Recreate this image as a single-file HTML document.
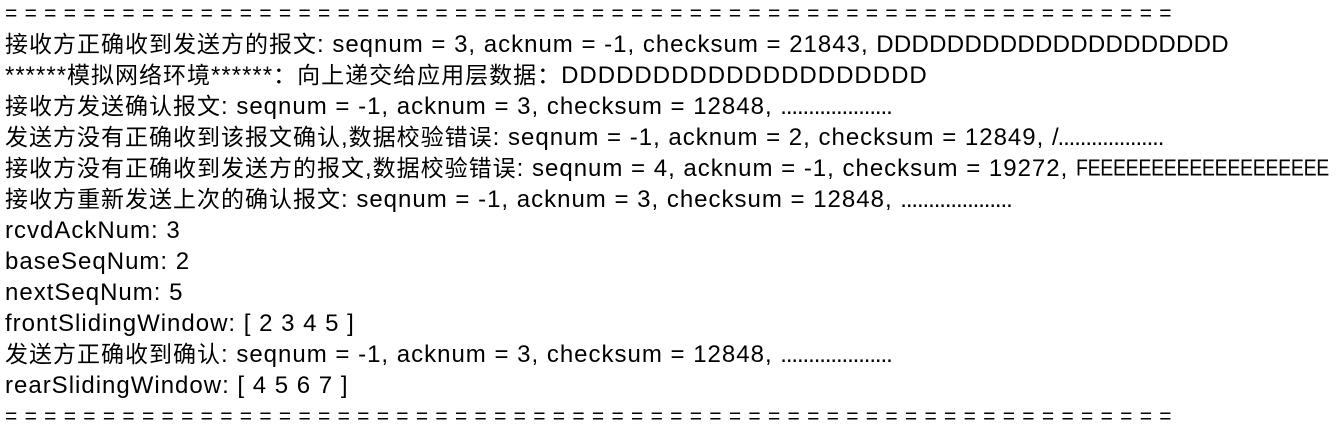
<!DOCTYPE html>
<html><head><meta charset="utf-8"><style>
html,body{margin:0;padding:0;background:#fff;width:1338px;height:430px;overflow:hidden}
body{font-family:"Liberation Sans","Noto Sans CJK SC",sans-serif;font-size:24px;letter-spacing:1px;line-height:31px;color:#000;padding:0 0 0 5px;box-sizing:border-box}
.w{position:relative;top:-2px}
div.l{white-space:pre;height:31px}
.c{font-size:23px;letter-spacing:1px}
.d{letter-spacing:-1.1px}
.e{letter-spacing:-0.3px;font-size:19.5px;display:inline-block;transform:scaleY(1.2);transform-origin:0 75%}
.eq{letter-spacing:7.3px;font-size:21px}
</style></head><body><div class="w">
<div class="l eq">============================================================</div>
<div class="l"><span class="c">接收方正确收到发送方的报文</span>: seqnum = 3, acknum = -1, checksum = 21843, <span style="letter-spacing:0.3px">DDDDDDDDDDDDDDDDDDDD</span></div>
<div class="l">******<span class="c">模拟网络环境</span>******<span class="c">：向上递交给应用层数据：</span>DDDDDDDDDDDDDDDDDDDD</div>
<div class="l"><span class="c">接收方发送确认报文</span>: seqnum = -1, acknum = 3, checksum = 12848, <span class="d">....................</span></div>
<div class="l"><span class="c">发送方没有正确收到该报文确认</span>,<span class="c">数据校验错误</span>: seqnum = -1, acknum = 2, checksum = 12849, <span class="d">/...................</span></div>
<div class="l"><span class="c">接收方没有正确收到发送方的报文</span>,<span class="c">数据校验错误</span>: seqnum = 4, acknum = -1, checksum = 19272, <span class="e">FEEEEEEEEEEEEEEEEEEE</span></div>
<div class="l"><span class="c">接收方重新发送上次的确认报文</span>: seqnum = -1, acknum = 3, checksum = 12848, <span class="d">....................</span></div>
<div class="l">rcvdAckNum: 3</div>
<div class="l">baseSeqNum: 2</div>
<div class="l">nextSeqNum: 5</div>
<div class="l">frontSlidingWindow: [ 2 3 4 5 ]</div>
<div class="l"><span class="c">发送方正确收到确认</span>: seqnum = -1, acknum = 3, checksum = 12848, <span class="d">....................</span></div>
<div class="l">rearSlidingWindow: [ 4 5 6 7 ]</div>
<div class="l eq">============================================================</div>
</div></body></html>
